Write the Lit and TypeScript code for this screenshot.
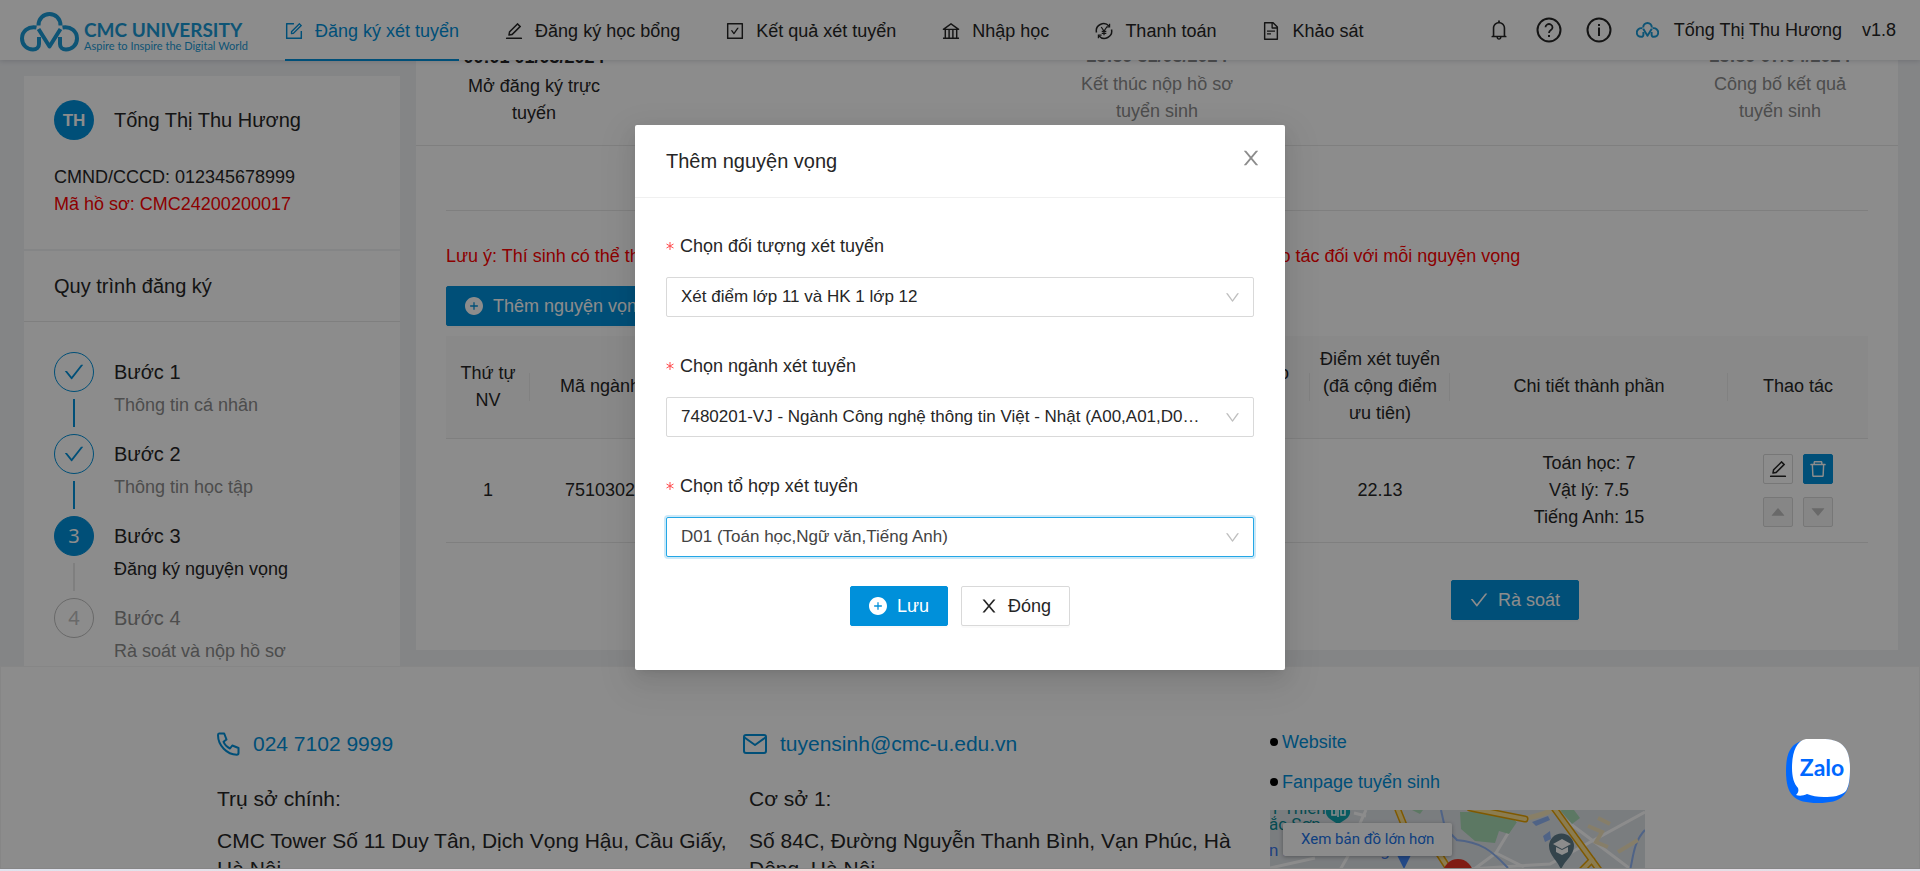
import { LitElement, html, css, svg, nothing } from "lit";
import { customElement } from "lit/decorators.js";
import { classMap } from "lit/directives/class-map.js";

const ICONS: Record<string, string> = {
  form: "M904 512h-56c-4.4 0-8 3.6-8 8v320H184V184h320c4.4 0 8-3.6 8-8v-56c0-4.4-3.6-8-8-8H144c-17.7 0-32 14.3-32 32v736c0 17.7 14.3 32 32 32h736c17.7 0 32-14.3 32-32V520c0-4.4-3.6-8-8-8zM355.9 534.9L354 653.8c-.1 8.9 7.1 16.2 16 16.2h.4l118-2.9c2-.1 4-.9 5.4-2.3l415.9-415c3.1-3.1 3.1-8.2 0-11.3L785.4 114.3c-1.6-1.6-3.6-2.3-5.7-2.3s-4.1.8-5.7 2.3l-415.8 415a8.3 8.3 0 00-2.3 5.6zm63.5 23.6L779.7 199l45.2 45.1-360.5 359.7-45.7 1.1.7-46.4z",
  edit: "M257.7 752c2 0 4-.2 6-.5L431.9 722c2-.4 3.9-1.3 5.3-2.8l423.9-423.9a9.96 9.96 0 000-14.1L694.9 114.9c-1.9-1.9-4.4-2.9-7.1-2.9s-5.2 1-7.1 2.9L256.8 538.8c-1.5 1.5-2.4 3.3-2.8 5.3l-29.5 168.2a33.5 33.5 0 009.4 29.8c6.6 6.4 14.9 9.9 23.8 9.9zm67.4-174.4L687.8 215l73.3 73.3-362.7 362.6-88.9 15.7 15.6-89zM880 836H144c-17.7 0-32 14.3-32 32v36c0 4.4 3.6 8 8 8h784c4.4 0 8-3.6 8-8v-36c0-17.7-14.3-32-32-32z",
  checkSquare: "M433.1 657.7a31.8 31.8 0 0051.7 0l210.6-292c3.8-5.3 0-12.7-6.5-12.7H642c-10.2 0-19.9 4.9-25.9 13.3L459 584.3l-71.2-98.8c-6-8.3-15.6-13.3-25.9-13.3H315c-6.5 0-10.3 7.4-6.5 12.7l124.6 172.8zM880 112H144c-17.7 0-32 14.3-32 32v736c0 17.7 14.3 32 32 32h736c17.7 0 32-14.3 32-32V144c0-17.7-14.3-32-32-32zm-40 728H184V184h656v656z",
  bank: "M894 462c30.9 0 43.8-39.7 18.7-58L530.8 126.2a31.81 31.81 0 00-37.6 0L111.3 404c-25.1 18.2-12.2 58 18.8 58H192v374h-72c-4.4 0-8 3.6-8 8v52c0 4.4 3.6 8 8 8h784c4.4 0 8-3.6 8-8v-52c0-4.4-3.6-8-8-8h-72V462h62zM512 196.7l271.1 197.2H240.9L512 196.7zM264 462h117v374H264V462zm189 0h117v374H453V462zm307 374H642V462h118v374z",
  fileText: "M854.6 288.6L639.4 73.4c-6-6-14.1-9.4-22.6-9.4H192c-17.7 0-32 14.3-32 32v832c0 17.7 14.3 32 32 32h640c17.7 0 32-14.3 32-32V311.3c0-8.5-3.4-16.7-9.4-22.7zM790.2 326H602V137.8L790.2 326zm1.8 562H232V136h302v216a42 42 0 0042 42h216v494zM504 618H320c-4.4 0-8 3.6-8 8v48c0 4.4 3.6 8 8 8h184c4.4 0 8-3.6 8-8v-48c0-4.4-3.6-8-8-8zM312 490v48c0 4.4 3.6 8 8 8h384c4.4 0 8-3.6 8-8v-48c0-4.4-3.6-8-8-8H320c-4.4 0-8 3.6-8 8z",
  bell: "M816 768h-24V428c0-141.1-104.3-257.8-240-277.2V112c0-22.1-17.9-40-40-40s-40 17.9-40 40v38.8C336.3 170.2 232 286.9 232 428v340h-24c-17.7 0-32 14.3-32 32v32c0 4.4 3.6 8 8 8h216c0 61.8 50.2 112 112 112s112-50.2 112-112h216c4.4 0 8-3.6 8-8v-32c0-17.7-14.3-32-32-32zM512 888c-26.5 0-48-21.5-48-48h96c0 26.5-21.5 48-48 48zM304 768V428c0-55.6 21.6-107.8 60.9-147.1S456.4 220 512 220c55.6 0 107.8 21.6 147.1 60.9S720 372.4 720 428v340H304z",
  plus: "M512 64C264.6 64 64 264.6 64 512s200.6 448 448 448 448-200.6 448-448S759.4 64 512 64zm192 472c0 4.4-3.6 8-8 8H544v152c0 4.4-3.6 8-8 8h-48c-4.4 0-8-3.6-8-8V544H328c-4.4 0-8-3.6-8-8v-48c0-4.4 3.6-8 8-8h152V328c0-4.4 3.6-8 8-8h48c4.4 0 8 3.6 8 8v152h152c4.4 0 8 3.6 8 8v48z",
  check: "M912 190h-69.9c-9.8 0-19.1 4.5-25.1 12.2L404.7 724.5 207 474a32 32 0 00-25.1-12.2H112c-6.7 0-10.4 7.7-6.3 12.9l273.9 347c12.8 16.2 37.4 16.2 50.3 0l488.4-618.9c4.1-5.1.4-12.8-6.3-12.8z",
  close: "M563.8 512l262.5-312.9c4.4-5.2.7-13.1-6.1-13.1h-79.8c-4.7 0-9.2 2.1-12.3 5.7L511.6 449.8 295.1 191.7c-3-3.6-7.5-5.7-12.3-5.7H203c-6.8 0-10.5 7.9-6.1 13.1L459.4 512 196.9 824.9A7.95 7.95 0 00203 838h79.8c4.7 0 9.2-2.1 12.3-5.7l216.5-258.1 216.5 258.1c3 3.6 7.5 5.7 12.3 5.7h79.8c6.8 0 10.5-7.9 6.1-13.1L563.8 512z",
  down: "M884 256h-75c-5.1 0-9.9 2.5-12.9 6.6L512 654.2 227.9 262.6c-3-4.1-7.8-6.6-12.9-6.6h-75c-6.5 0-10.3 7.4-6.5 12.7l352.6 486.1c12.8 17.6 39 17.6 51.7 0l352.6-486.1c3.9-5.3.1-12.7-6.4-12.7z",
  trash: "M360 184h-8c4.4 0 8-3.6 8-8v8h304v-8c0 4.4 3.6 8 8 8h-8v72h72v-80c0-35.3-28.7-64-64-64H352c-35.3 0-64 28.7-64 64v80h72v-72zm504 72H160c-17.7 0-32 14.3-32 32v32c0 4.4 3.6 8 8 8h60.4l24.7 523c1.6 34.1 29.8 61 63.9 61h454c34.2 0 62.3-26.8 63.9-61l24.7-523H888c4.4 0 8-3.6 8-8v-32c0-17.7-14.3-32-32-32zM731.3 840H292.7l-24.2-512h487l-24.2 512z",
  caretUp: "M858.9 689L530.5 308.2c-9.4-10.9-27.5-10.9-37 0L165.1 689c-12.2 14.2-1.2 35 18.5 35h656.8c19.7 0 30.7-20.8 18.5-35z",
  caretDown: "M840.4 300H183.6c-19.7 0-30.7 20.8-18.5 35l328.4 380.8c9.4 10.9 27.5 10.9 37 0L858.9 335c12.2-14.2 1.2-35-18.5-35z",
};

const icon = (name: string, size = 18) => html`
  <svg width=${size} height=${size} viewBox="64 64 896 896" fill="currentColor" aria-hidden="true">
    <path d=${ICONS[name]}></path>
  </svg>`;

const payIcon = html`
  <svg width="18" height="18" viewBox="0 0 18 18" fill="none" stroke="currentColor" stroke-width="1.5" aria-hidden="true">
    <path d="M1.500 10.500A7.300 7.300 0 0 1 14 4M16.500 7.500A7.300 7.300 0 0 1 4 14"></path>
    <path d="M14.600 1.800v3h-3.200M3.400 16.200v-3h3.200" stroke-width="1.200"></path>
    <path d="M6.200 5l2.800 4 2.800-4M9 9v4.200M6.700 9.300h4.600M6.700 11.300h4.600" stroke-width="1.200"></path>
  </svg>`;

const helpIcon = html`
  <svg width="26" height="26" viewBox="0 0 26 26" fill="none" stroke="currentColor" stroke-width="2" aria-hidden="true">
    <circle cx="13" cy="13" r="11.500"></circle>
    <path d="M9.500 10.300a3.500 3.300 0 1 1 5.400 2.800c-1.300.9-1.900 1.400-1.900 3" stroke-width="1.800"></path>
    <path d="M12 18h2v2h-2z" fill="currentColor" stroke="none"></path>
  </svg>`;

const infoIcon = html`
  <svg width="26" height="26" viewBox="0 0 26 26" fill="none" stroke="currentColor" stroke-width="2" aria-hidden="true">
    <circle cx="13" cy="13" r="11.500"></circle>
    <path d="M13 10.500v8.500"></path>
    <path d="M12 7h2v2h-2z" fill="currentColor" stroke="none"></path>
  </svg>`;

const cloudShape = svg`
  <path d="M18.500 13.500C18.500 6.500 23.500 2 29.500 2S40.500 6.500 40.500 13.500"></path>
  <path d="M16.500 15.500C8 14 2 19.500 2 26.500S7.500 37.500 13 37.500C16.500 37.500 19 35.500 19 32V25"></path>
  <path d="M42.500 15.500C51 14 57 19.500 57 26.500S51.500 37.500 46 37.500C42.500 37.500 40 35.500 40 32V25"></path>
  <path d="M18.500 17L29.500 34.500L40.500 17" stroke-linejoin="round"></path>`;

const cloud = (w: number, h: number, stroke: number) => html`
  <svg width=${w} height=${h} viewBox="0 0 59 40" fill="none" stroke="currentColor" stroke-width=${stroke} aria-hidden="true">
    ${cloudShape}
  </svg>`;

const base = css`
  :host { font-family: "Liberation Sans", Arial, sans-serif; font-size: 18px; line-height: 28px; color: #262626; }
  * { box-sizing: border-box; }
  a { color: inherit; text-decoration: none; }
  h2, h3, p, ul, ol { margin: 0; padding: 0; font: inherit; list-style: none; }
  svg { display: block; flex: none; }
  button { font: inherit; margin: 0; padding: 0; border: 0; background: none; color: inherit; }
  .btn { display: inline-flex; align-items: center; justify-content: center; gap: 10px; height: 40px; padding: 0 18px;
    border: 1px solid #d9d9d9; border-radius: 2px; background: #fff; line-height: 26px; box-shadow: 0 2px 0 rgba(0, 0, 0, .02); }
  .btn.primary { background: #0090da; border-color: #0090da; color: #fff; }
`;

@customElement("site-header")
class SiteHeader extends LitElement {
  static styles = [base, css`
    :host { display: block; }
    .bar { display: flex; align-items: center; height: 60px; padding: 0 24px 0 20px; background: #fff;
      box-shadow: 0 1px 5px rgba(0, 21, 41, .16); }
    .brand { display: flex; align-items: flex-end; gap: 5px; width: 265px; color: #1a9ad6; }
    .words { display: flex; flex-direction: column; font-family: Lato, sans-serif; white-space: nowrap; padding-top: 12px; }
    .name { font-size: 19px; line-height: 20px; font-weight: 700; }
    .tag { font-size: 11px; line-height: 12px; }
    nav { display: flex; gap: 46px; flex: 1; }
    nav a { display: flex; align-items: center; gap: 12px; height: 62px; padding-top: 3px; border-bottom: 2px solid transparent; white-space: nowrap; }
    nav a.active { color: #0090da; border-color: #0090da; }
    .tools { display: flex; align-items: center; white-space: nowrap; }
    .tools button { display: grid; place-items: center; width: 50px; height: 40px; }
    .mini { color: #1a9ad6; margin: 0 15px 0 12px; }
    .version { margin-left: 20px; }
  `];

  items = [
    ["Đăng ký xét tuyển", "form"], ["Đăng ký học bổng", "edit"], ["Kết quả xét tuyển", "checkSquare"],
    ["Nhập học", "bank"], ["Thanh toán", "pay"], ["Khảo sát", "fileText"],
  ];

  render() {
    return html`
      <header class="bar">
        <a class="brand" href="#">
          ${cloud(59, 40, 4)}
          <span class="words"><span class="name">CMC UNIVERSITY</span><span class="tag">Aspire to Inspire the Digital World</span></span>
        </a>
        <nav>
          ${this.items.map(([label, name], i) => html`
            <a href="#" class=${classMap({ active: i === 0 })}>${name === "pay" ? payIcon : icon(name)}<span>${label}</span></a>`)}
        </nav>
        <div class="tools">
          <button aria-label="Thông báo">${icon("bell", 20)}</button>
          <button aria-label="Trợ giúp">${helpIcon}</button>
          <button aria-label="Thông tin">${infoIcon}</button>
          <span class="mini">${cloud(23, 16, 5)}</span>
          <span>Tống Thị Thu Hương</span>
          <span class="version">v1.8</span>
        </div>
      </header>`;
  }
}

@customElement("profile-panel")
class ProfilePanel extends LitElement {
  static styles = [base, css`
    :host { display: flex; flex-direction: column; background: #fff; }
    .person { padding: 24px 30px 30px; height: 173px; line-height: 27px; }
    .who { display: flex; align-items: center; gap: 20px; margin-bottom: 24px; font-size: 20px; }
    .avatar { display: grid; place-items: center; width: 40px; height: 40px; border-radius: 50%; background: #0090da; color: #fff;
      font-size: 17px; font-weight: 700; }
    .code { color: #f00; }
    h2 { height: 73px; padding: 0 30px; font-size: 20px; line-height: 71px; border-top: 2px solid #f0f2f5; border-bottom: 1px solid #e8e8e8; }
    ol { display: flex; flex-direction: column; padding: 30px 30px 0; }
    li { display: grid; grid-template-columns: 40px 1fr; column-gap: 20px; height: 82px; }
    li:last-child { height: 68px; }
    .rail { display: flex; flex-direction: column; align-items: center; gap: 7px; }
    .dot { display: grid; place-items: center; width: 40px; height: 40px; border: 1px solid #0090da; border-radius: 50%;
      color: #0090da; font: 20px/38px "Noto Sans", sans-serif; }
    .line { width: 2px; height: 28px; background: #0090da; }
    .title { font-size: 20px; line-height: 40px; }
    .desc { line-height: 26px; color: #8c8c8c; }
    .current .dot { background: #0090da; color: #fff; }
    .current .line { background: #e8e8e8; }
    .current .desc { color: #262626; }
    .wait .dot { border-color: #bfbfbf; color: #bfbfbf; }
    .wait .title { color: #8c8c8c; }
  `];

  steps = [
    ["done", "Bước 1", "Thông tin cá nhân"], ["done", "Bước 2", "Thông tin học tập"],
    ["current", "Bước 3", "Đăng ký nguyện vọng"], ["wait", "Bước 4", "Rà soát và nộp hồ sơ"],
  ];

  render() {
    return html`
      <section class="person">
        <div class="who"><span class="avatar">TH</span><span>Tống Thị Thu Hương</span></div>
        <p>CMND/CCCD: 012345678999</p>
        <p class="code">Mã hồ sơ: CMC24200200017</p>
      </section>
      <h2>Quy trình đăng ký</h2>
      <ol>
        ${this.steps.map(([state, title, desc], i) => html`
          <li class=${state}>
            <div class="rail">
              <span class="dot">${state === "done" ? icon("check", 20) : i + 1}</span>
              ${state === "wait" ? nothing : html`<span class="line"></span>`}
            </div>
            <div><p class="title">${title}</p><p class="desc">${desc}</p></div>
          </li>`)}
      </ol>`;
  }
}

@customElement("wish-panel")
class WishPanel extends LitElement {
  static styles = [base, css`
    :host { display: block; background: #fff; }
    .timeline { display: flex; justify-content: space-between; padding: 42px 30px 18px; border-bottom: 1px solid #e8e8e8; text-align: center; }
    .timeline li { width: 176px; padding: 0 8px; color: #8c8c8c; }
    .timeline strong { display: block; line-height: 29px; white-space: nowrap; }
    .timeline li > span { display: block; line-height: 27px; }
    .timeline li:first-child { color: #262626; }
    .timeline li:first-child strong { line-height: 31px; }
    .body { padding: 64px 30px 30px; }
    .note { padding-top: 31px; border-top: 1px solid #e8e8e8; color: #f00; margin-bottom: 16px; white-space: nowrap; }
    table { width: 100%; margin-top: 10px; border-collapse: collapse; table-layout: fixed; text-align: center; line-height: 27px; }
    th { padding: 10px 8px; font-weight: 400; background: #fafafa; border-bottom: 1px solid #e8e8e8; height: 102px;
      background-image: linear-gradient(#ececec, #ececec); background-size: 1px 28px; background-position: right center; background-repeat: no-repeat; }
    th:last-child { background-image: none; }
    td { padding: 10px 8px; height: 104px; border-bottom: 1px solid #e8e8e8; }
    .c1 { width: 84px; } .c2 { width: 140px; } .c4 { width: 124px; } .c6 { width: 278px; }
    .acts { display: grid; grid-template-columns: 30px 30px; gap: 13px 10px; justify-content: center; }
    .acts button { display: grid; place-items: center; width: 30px; height: 30px; border: 1px solid #d9d9d9; border-radius: 2px; }
    .acts button.del { background: #0090da; border-color: #0090da; color: #fff; }
    .acts button:disabled { background: #f5f5f5; color: #bfbfbf; }
    .foot { display: flex; justify-content: flex-end; padding: 37px 289px 0 0; }
  `];

  stages = [
    ["00:01 01/03/2024", "Mở đăng ký trực tuyến"],
    ["23:59 31/03/2024", "Kết thúc nộp hồ sơ tuyển sinh"],
    ["23:59 07/04/2024", "Công bố kết quả tuyển sinh"],
  ];

  render() {
    return html`
      <ol class="timeline">
        ${this.stages.map(([date, text]) => html`<li><strong>${date}</strong><span>${text}</span></li>`)}
      </ol>
      <div class="body">
        <p class="note">Lưu ý: Thí sinh có thể thêm, sửa, xóa và sắp xếp thứ tự nguyện vọng bằng cách sử dụng các nút cột thao tác đối với mỗi nguyện vọng</p>
        <button class="btn primary">${icon("plus")}<span>Thêm nguyện vọng</span></button>
        <table>
          <colgroup><col class="c1"><col class="c2"><col><col class="c4"><col class="c2"><col class="c6"><col class="c2"></colgroup>
          <thead><tr>
            <th>Thứ tự NV</th><th>Mã ngành</th><th>Tên ngành</th><th>Điểm theo<br>tổ hợp</th>
            <th>Điểm xét tuyển (đã cộng điểm ưu tiên)</th><th>Chi tiết thành phần</th><th>Thao tác</th>
          </tr></thead>
          <tbody><tr>
            <td>1</td><td>7510302</td><td></td><td></td><td>22.13</td>
            <td>Toán học: 7<br>Vật lý: 7.5<br>Tiếng Anh: 15</td>
            <td><div class="acts">
              <button aria-label="Sửa">${icon("edit")}</button>
              <button class="del" aria-label="Xóa">${icon("trash")}</button>
              <button disabled aria-label="Lên">${icon("caretUp", 16)}</button>
              <button disabled aria-label="Xuống">${icon("caretDown", 16)}</button>
            </div></td>
          </tr></tbody>
        </table>
        <div class="foot"><button class="btn primary">${icon("check")}<span>Rà soát</span></button></div>
      </div>`;
  }
}

@customElement("site-footer")
class SiteFooter extends LitElement {
  static styles = [base, css`
    :host { display: block; flex: 1; min-height: 0; overflow: hidden; background: #fff; border: 1px solid #f5f5f5; }
    .cols { display: grid; grid-template-columns: 532px 1fr 375px; padding: 0 274px 0 216px; font-size: 21px; }
    .col { padding: 62px 10px 0 0; }
    .contact { display: flex; align-items: center; gap: 13px; height: 30px; color: #0090da; }
    .mail { margin-left: -6px; }
    .head { margin-top: 26px; }
    .addr { margin-top: 14px; line-height: 28px; }
    .side { padding-top: 63px; font-size: 18px; }
    .side li { display: flex; align-items: center; gap: 4px; height: 24px; margin-bottom: 16px; color: #0090da; }
    .side li::before { content: ""; width: 8px; height: 8px; border-radius: 50%; background: #000; }
    .map { position: relative; height: 150px; overflow: hidden; background: #dfe3e8; }
    .larger { position: absolute; left: 13px; top: 13px; padding: 0 18px; background: #fff; color: #1a73e8; border-radius: 2px;
      font: 15px/33px Roboto, sans-serif; box-shadow: 0 1px 4px rgba(0, 0, 0, .3); }
    .map text { font-family: Roboto, sans-serif; }
  `];

  render() {
    return html`
      <footer class="cols">
        <section class="col">
          <a class="contact" href="#">
            <svg width="23" height="24" viewBox="0 0 23 24" fill="none" stroke="currentColor" stroke-width="2" stroke-linejoin="round" aria-hidden="true">
              <path d="M2 1.500h5.200l2.300 6-3 2.200c1.200 3.200 3.500 5.400 6.500 6.800l2.300-3 6.200 2.500v5c0 1-.7 1.700-1.700 1.700C10 22.500 1 13.500 1 3c0-.9.300-1.500 1-1.500z"></path>
            </svg>
            <span>024 7102 9999</span>
          </a>
          <p class="head">Trụ sở chính:</p>
          <p class="addr">CMC Tower Số 11 Duy Tân, Dịch Vọng Hậu, Cầu Giấy, Hà Nội</p>
        </section>
        <section class="col">
          <a class="contact mail" href="#">
            <svg width="24" height="20" viewBox="0 0 24 20" fill="none" stroke="currentColor" stroke-width="2" stroke-linejoin="round" aria-hidden="true">
              <rect x="1" y="1" width="22" height="18" rx="2"></rect><path d="M1.500 3.500L12 11l10.500-7.500"></path>
            </svg>
            <span>tuyensinh@cmc-u.edu.vn</span>
          </a>
          <p class="head">Cơ sở 1:</p>
          <p class="addr">Số 84C, Đường Nguyễn Thanh Bình, Vạn Phúc, Hà Đông, Hà Nội</p>
        </section>
        <section class="side">
          <ul><li><a href="#">Website</a></li><li><a href="#">Fanpage tuyển sinh</a></li></ul>
          <div class="map">
            <svg width="375" height="150" viewBox="0 0 375 150" fill="none" aria-hidden="true">
              <g stroke="#fff" stroke-width="3">
                <path d="M78 40L96 0M84 3l12 3M70 60L90 25M246 10L226 43l28 14M150 62l130-8 95-52M375 70L290 6M0 58l45-10M226 43l-30 22"></path>
              </g>
              <path d="M190 2h45l12 10-8 12-10-3-4 12-20-2-14-12zM290 0h14l6 8-8 6zM142 0l8 4 3-4z" fill="#a8dab5"></path>
              <path d="M262 12l16-6 2 4-14 6zM273 26l7-5 1 8-6 3z" fill="#90b4f5"></path>
              <path d="M171 0l4 18 12 12M186 30c25 2 35 10 52 28M375 20c-12 12-12 30-15 40" stroke="#90b4f5" stroke-width="2"></path>
              <path d="M318 16l14 6-6 10 12 5M328 8l12 6M348 42l20-12" stroke="#f5e6c0" stroke-width="4"></path>
              <path d="M256 8c16-2 24-8 35-10" stroke="#f8e8bc" stroke-width="5"></path>
              <path d="M200-2l55 11M128 0l8 20M160 30l22 34M284-2l48 66M322 50l-14 14" stroke="#e8a200" stroke-width="7" stroke-linecap="round"></path>
              <path d="M200-2l55 11M128 0l8 20M160 30l22 34M284-2l48 66M322 50l-14 14" stroke="#fde293" stroke-width="4" stroke-linecap="round"></path>
              <text x="0" y="4" font-size="17" fill="#0b8a94">T Thiên</text>
              <text x="-1" y="20" font-size="17" fill="#0b8a94">ắc Sơn</text>
              <text x="-1" y="46" font-size="17" fill="#3b78e7">n nhân Hà Đông</text>
              <path d="M56 0h24c1 6-3 9-12 14C59 9 55 6 56 0z" fill="#12a4af"></path>
              <path d="M62 0v5h4V0M68 0v7M71 0v5h4V0" stroke="#fff" stroke-width="1.500"></path>
              <path d="M127 45h14l-7 14z" fill="#4285f4"></path>
              <circle cx="188" cy="64" r="15" fill="#ea3323"></circle>
              <path d="M291 60c-2-8-12-14-12-24a12.500 12.500 0 0 1 25 0c0 10-11 16-13 24z" fill="#607d8b"></path>
              <path d="M283 34l9-5 9 5-9 5zM286 37v5l6 3 6-3v-5l-6 3z" fill="#fff"></path>
            </svg>
            <a class="larger" href="#">Xem bản đồ lớn hơn</a>
          </div>
        </section>
      </footer>`;
  }
}

@customElement("wish-dialog")
class WishDialog extends LitElement {
  static styles = [base, css`
    :host { position: absolute; inset: 0; display: flex; justify-content: center; align-items: flex-start; padding-top: 125px; background: rgba(0, 0, 0, .45); }
    .dialog { width: 650px; background: #fff; border-radius: 2px; padding-bottom: 44px;
      box-shadow: 0 4px 8px -5px rgba(0, 0, 0, .12), 0 8px 20px rgba(0, 0, 0, .08), 0 12px 35px 10px rgba(0, 0, 0, .05); }
    .top { display: flex; align-items: center; justify-content: space-between; height: 73px; padding: 0 24px 0 31px; border-bottom: 1px solid #f0f0f0; font-size: 20px; }
    .top button { display: grid; place-items: center; width: 20px; height: 20px; color: #8c8c8c; margin-bottom: 6px; }
    form { display: flex; flex-direction: column; gap: 31px; padding: 30px 31px 0; }
    .field { display: flex; flex-direction: column; gap: 13px; }
    label { display: flex; align-items: center; gap: 6px; height: 36px; }
    .star { color: #ff4d4f; width: 8px; height: 8px; }
    .box { display: grid; align-items: center; }
    .box > * { grid-area: 1 / 1; }
    .box svg { justify-self: end; margin-right: 14px; color: #bfbfbf; pointer-events: none; }
    select { appearance: none; width: 100%; height: 40px; margin: 0; padding: 0 50px 0 14px; border: 1px solid #d9d9d9; border-radius: 2px;
      background: #fff; font: inherit; font-size: 17px; color: #262626; text-overflow: ellipsis; overflow: hidden; white-space: nowrap; outline: 0; }
    .focus select { border-color: #24a7e6; box-shadow: 0 0 0 2px rgba(0, 144, 218, .2); color: #434343; }
    .row { display: flex; justify-content: center; gap: 13px; margin-top: -2px; }
  `];

  fields = [
    ["target", "Chọn đối tượng xét tuyển", "Xét điểm lớp 11 và HK 1 lớp 12"],
    ["major", "Chọn ngành xét tuyển", "7480201-VJ - Ngành Công nghệ thông tin Việt - Nhật (A00,A01,D01,D06,D07)"],
    ["combo", "Chọn tổ hợp xét tuyển", "D01 (Toán học,Ngữ văn,Tiếng Anh)"],
  ];

  render() {
    return html`
      <div class="dialog" role="dialog" aria-labelledby="title">
        <div class="top"><h2 id="title">Thêm nguyện vọng</h2><button aria-label="Đóng cửa sổ">${icon("close", 20)}</button></div>
        <form>
          ${this.fields.map(([id, label, value]) => html`
            <div class="field">
              <label for=${id}>
                <svg class="star" viewBox="0 0 8 8" stroke="currentColor" stroke-width="1" aria-hidden="true"><path d="M4 0v8M.5 2l7 4M7.500 2l-7 4"></path></svg>
                <span>${label}</span>
              </label>
              <div class=${classMap({ box: true, focus: id === "combo" })}>
                <select id=${id}><option>${value}</option></select>${icon("down", 15)}
              </div>
            </div>`)}
          <div class="row">
            <button type="button" class="btn primary">${icon("plus")}<span>Lưu</span></button>
            <button type="button" class="btn">${icon("close")}<span>Đóng</span></button>
          </div>
        </form>
      </div>`;
  }
}

@customElement("app-root")
class AppRoot extends LitElement {
  static styles = [base, css`
    :host { display: flex; flex-direction: column; height: 100vh; overflow: hidden; background: #f0f2f5; }
    .page { position: relative; flex: 1; min-height: 0; display: flex; flex-direction: column; overflow: hidden; }
    site-header { position: absolute; inset: 0 0 auto; z-index: 1; }
    .content { display: grid; grid-template-columns: 376px 1fr; column-gap: 16px; padding: 0 22px 0 24px; }
    .content profile-panel { margin-top: 76px; }
    .content wish-panel { margin-bottom: 16px; align-self: start; }
    wish-dialog { z-index: 2; }
    .edge { height: 2px; background: linear-gradient(90deg, #dfe3ee, #f3d9d6 50%, #f0d8d8 60%, #e0e0ea); }
    .zalo { position: absolute; right: 70px; bottom: 66px; z-index: 3; }
  `];

  render() {
    return html`
      <div class="page">
        <site-header></site-header>
        <main class="content"><profile-panel></profile-panel><wish-panel></wish-panel></main>
        <site-footer></site-footer>
        <wish-dialog></wish-dialog>
        <a class="zalo" href="#" aria-label="Zalo">
          <svg width="64" height="64" viewBox="0 0 64 64">
            <path d="M32 0C56 0 64 8 64 32S56 64 32 64 0 56 0 32 8 0 32 0z" fill="#0068ff"></path>
            <path d="M36 0C56 0 64 9 64 29c0 11-1 18-4 23-5 5-13 6-22 6-7 0-12-1-17-3-4 2-8 2-11 1 2-2 3-4 2-7C8 45 6 38 6 29 6 14 10 2 20 0z" fill="#fff"></path>
            <text x="36" y="37" text-anchor="middle" font-family="Lato, sans-serif" font-weight="700" font-size="23" fill="#0068ff">Zalo</text>
          </svg>
        </a>
      </div>
      <div class="edge"></div>`;
  }
}
